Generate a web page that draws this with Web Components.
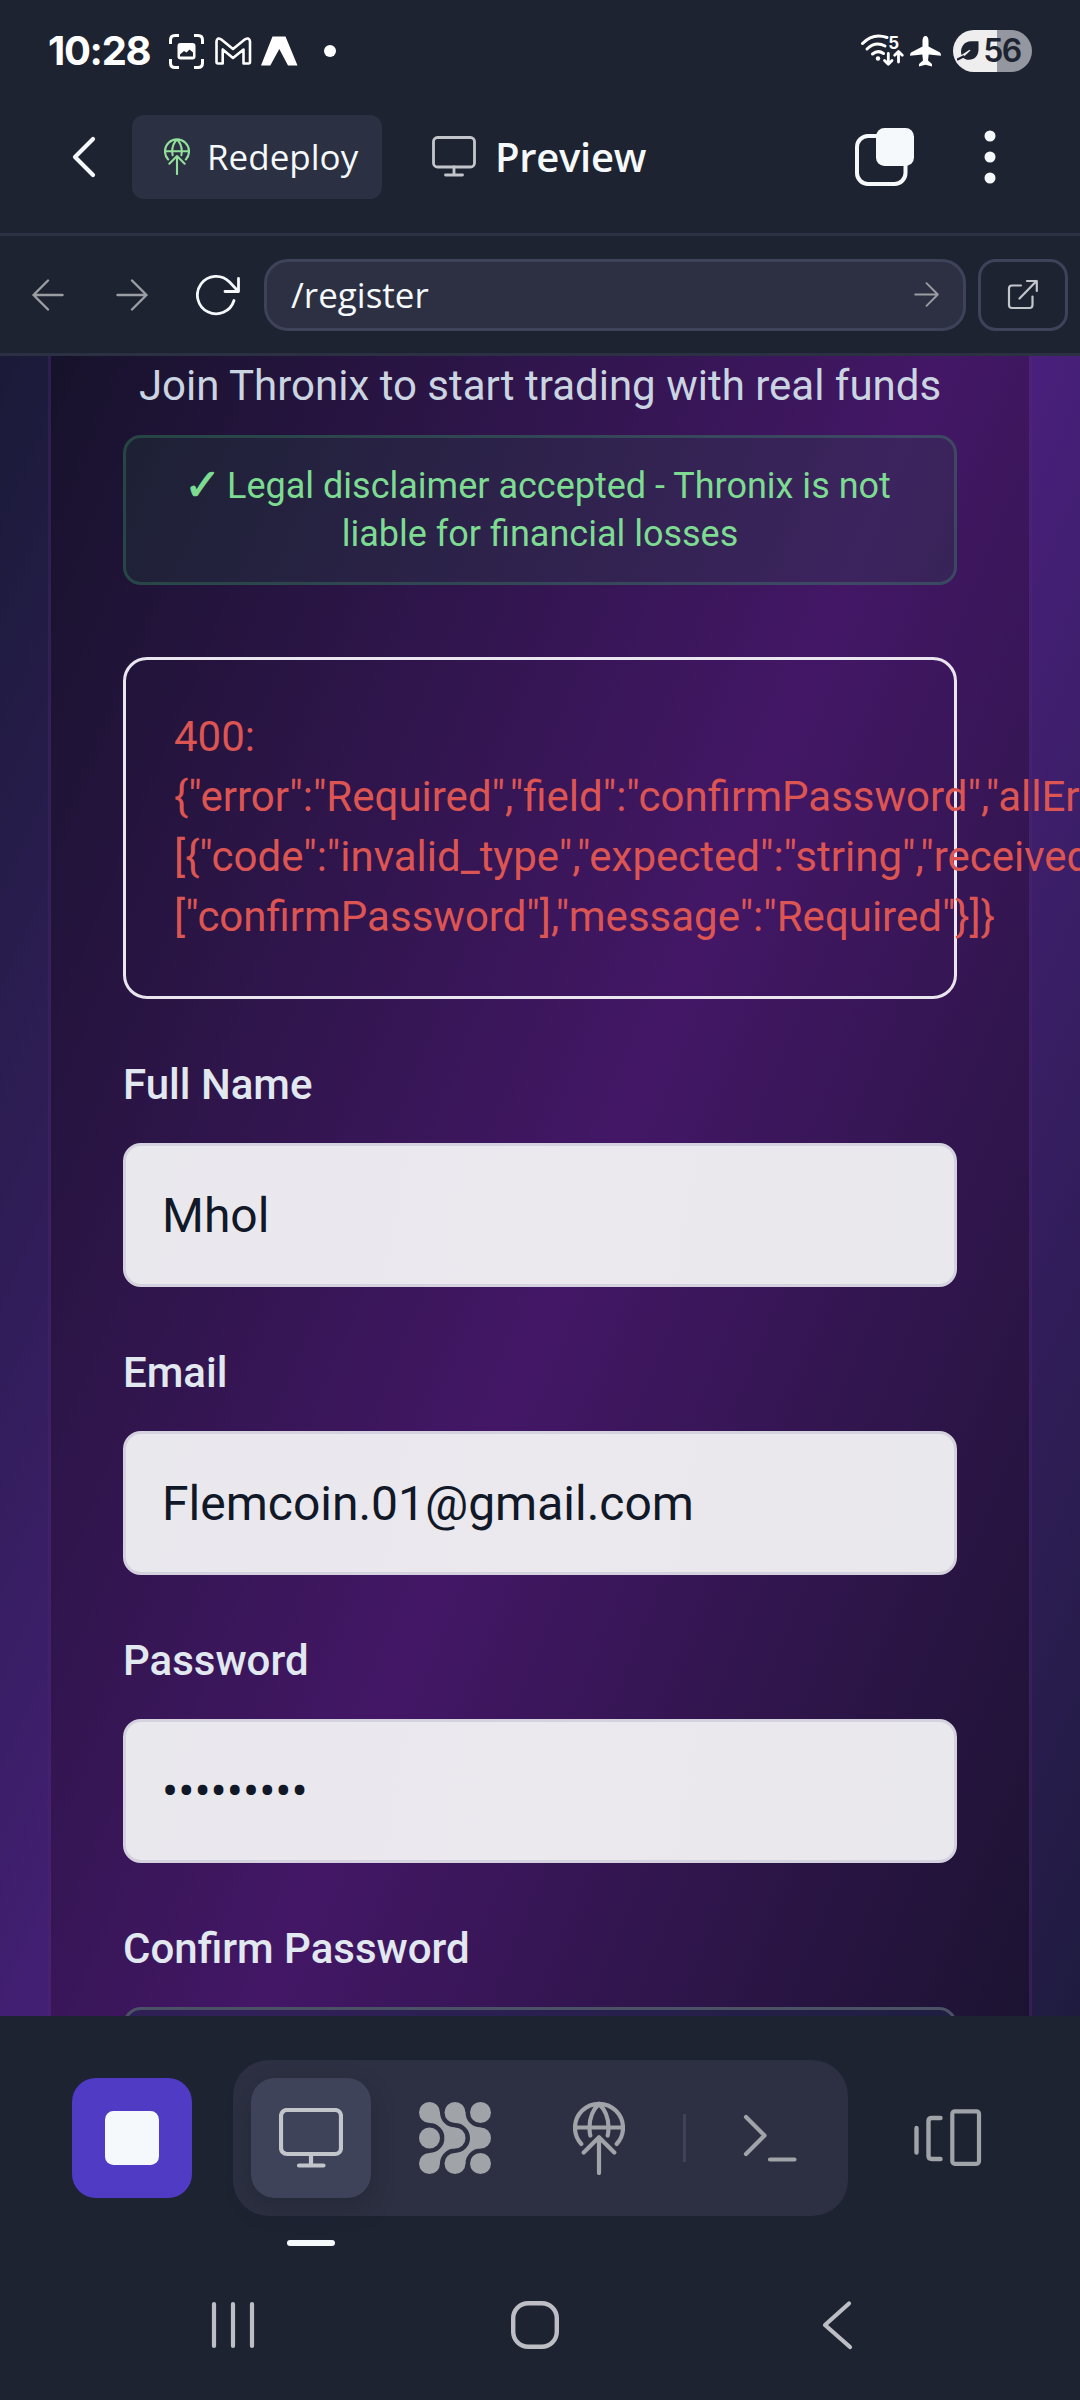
<!DOCTYPE html>
<html lang="en">
<head>
<meta charset="utf-8">
<title>Preview</title>
<style>
html,body{margin:0;background:#1e2332}
body{width:1080px;height:2400px;overflow:hidden;font-family:Roboto,"Noto Sans",sans-serif;color:#f5f9fc}
</style>
</head>
<body>
<app-shell></app-shell>
<script>
const define=(tag,css,html)=>{
  customElements.define(tag,class extends HTMLElement{
    constructor(){
      super();
      const root=this.attachShadow({mode:'open'});
      root.innerHTML=`<style>*{box-sizing:border-box}svg{display:block}:host{box-sizing:border-box;display:block}${css}</style>${typeof html==='function'?html(this):html}`;
    }
  });
};

const neck='M10.5 0A15 15 0 0 0 25.5 15V25.5H15A15 15 0 0 0 0 10.5V0Z';
const ring=[0,25.5,51].flatMap(x=>[0,25.5,51].map(y=>`<circle cx="${x}" cy="${y}" r="10.5"/>`)).join('');
const globe=[52,74,`<path d="M8.3 43A24 24 0 1 1 43.7 43M2 26.5H50M26 3C19 9.500 16.500 18 16.500 26.500Q16.500 31 17.300 34.500M26 3C33 9.500 35.500 18 35.500 26.500Q35.500 31 34.700 34.500M26 72V36.500M10.700 51.500 26 36.200 41.300 51.500" stroke-width="4.200"/>`];
const icons={
  shot:[35,35,`<path d="M1.500 10V6Q1.500 1.500 6 1.500H10M25 1.500H29Q33.500 1.500 33.500 6V10M33.500 25V29Q33.500 33.500 29 33.500H25M10 33.500H6Q1.500 33.500 1.500 29V25" stroke-width="3" stroke-linecap="butt"/><path fill="currentColor" stroke="none" fill-rule="evenodd" d="M11.500 9H23.500Q26.500 9 26.500 12V22.500Q26.500 25.500 23.500 25.500H11.500Q8.500 25.500 8.500 22.500V12Q8.500 9 11.500 9ZM11 22.500H24V18.500L20.500 15.500 17.500 18.500 15 17 11 20.500Z"/>`],
  mail:[38,30,`<path d="M2.500 5.500Q3 1 7 3.300L19 13 31 3.300Q35.500 1 36 5.500V26Q36 27.500 34.500 27.500H29.500V13.500L19 22 8.700 13.500V27.500H4Q2.500 27.500 2.500 26Z" stroke-width="2.600"/>`],
  peak:[37,30,`<path fill="currentColor" stroke="none" d="M11.500 .5H24.500L36.500 29.500H27L18.300 13 9.300 29.500H0Z"/>`],
  plane:[31,31,`<path fill="currentColor" stroke="none" d="M15.500 0C17.600 0 18.500 2 18.500 5V10.500L30 16.500Q31 17.300 31 19.800L18.700 18.500 18 24.500 22 28V30.500L15.500 28.800 9 30.500V28L13 24.500 12.300 18.500 0 19.800Q0 17.300 1 16.500L12.500 10.500V5C12.500 2 13.400 0 15.500 0Z"/>`],
  wifi:[44,34,`<path d="M1.500 9.500Q12 -1.500 26 3.500" stroke-width="3"/><path d="M6 15Q14.500 7 24 12" stroke-width="3"/><path d="M11.500 20Q17 15.500 22.500 19.500" stroke-width="3"/><circle cx="17" cy="24.500" r="2.200" fill="currentColor" stroke="none"/><path d="M27.300 19.500V30M23.500 26.500 27.300 30.300 31 26.500M37.500 28V18M33.700 21.300 37.500 17.500 41.300 21.300" stroke-width="2.800"/><text x="27.200" y="14.500" font-family="Inter" font-weight="700" font-size="17" fill="currentColor" stroke="none">5</text>`],
  leaf:[22,20,`<path fill="currentColor" stroke="none" d="M21.500 .3V8.500C21.500 15 17.500 18.800 12 18.800 9.500 18.800 7.500 18 6 16.500L13.500 9.500 12.500 8.700 4.500 14C2.500 5.500 8 .3 14 .3Z"/><path d="M1 18.300 6.500 15.500" stroke-width="2.400"/>`],
  back:[26,42,`<path d="M22 3 4 21 22 39" stroke-width="4.200"/>`],
  globe,
  monitor:[64,60,`<rect x="2" y="2" width="60" height="44" rx="6" stroke-width="4.200"/><path d="M32 46V57M20 57.500H44.500" stroke-width="4.200"/>`],
  monitorThin:[44,41,`<rect x="1.500" y="1.500" width="41" height="29.500" rx="4" stroke-width="2.800"/><path d="M22 31V38.500M13.500 39H30.500" stroke-width="2.800"/>`],
  panes:[60,60,`<rect x="2" y="9" width="48.500" height="48" rx="11" stroke-width="4"/><rect x="21" y="1" width="38" height="38" rx="8.500" fill="currentColor" stroke="none"/>`],
  more:[12,56,`<g fill="currentColor" stroke="none"><circle cx="6" cy="7" r="5.500"/><circle cx="6" cy="28" r="5.500"/><circle cx="6" cy="49" r="5.500"/></g>`],
  left:[32,32,`<path d="M30.500 16H1.500M16 1.500 1.500 16 16 30.500" stroke-width="2.400"/>`],
  right:[32,32,`<path d="M1.500 16H30.500M16 1.500 30.500 16 16 30.500" stroke-width="2.400"/>`],
  reload:[44,42,`<path d="M38 26.500A18.700 18.700 0 1 1 33.500 8L42 17M42.500 4.500V17.500H29" stroke-width="2.800"/>`],
  open:[32,32,`<path d="M14 6.500H5Q2 6.500 2 9.500V26Q2 29 5 29H22.500Q25.500 29 25.500 26V17.500M12.500 19.500 29.500 2M20 2H29.800V12" stroke-width="2.200"/>`],
  stop:[54,54,`<rect width="54" height="54" rx="8.500" fill="currentColor" stroke="none"/>`],
  mesh:[72,72,`<g fill="currentColor" stroke="none" transform="translate(10.500 10.500)">${ring}<path d="${neck}"/><path d="${neck}" transform="translate(25.500)"/><path d="${neck}" transform="translate(0 51) scale(1 -1)"/><path d="${neck}" transform="translate(25.500 51) scale(1 -1)"/></g>`],
  shell:[54,50,`<path d="M3 4 21.500 22.500 3 41M27 46.500H51.500" stroke-width="4.200"/>`],
  tabs:[68,60,`<path d="M2.500 20V44.500M26.500 10H18Q14.500 10 14.500 13V48Q14.500 51 18 51H26.500" stroke-width="4.400"/><rect x="38.300" y="3.300" width="26.700" height="52.500" rx="2.500" stroke-width="4.200"/>`],
  recents:[44,48,`<path d="M3 3V45M22 3V45M41 3V45" stroke-width="4.200"/>`],
  home:[50,50,`<rect x="3.200" y="3.200" width="43.600" height="43.600" rx="15" stroke-width="4.400"/>`],
  navBack:[32,50,`<path d="M28 3.500 4 25 29 47" stroke-width="4.200"/>`]
};
define('ui-icon',':host{flex:none;display:block}',el=>{
  const [w,h,body]=icons[el.getAttribute('name')];
  const width=+(el.getAttribute('width')||w);
  return `<svg width="${width}" height="${h*width/w}" viewBox="0 0 ${w} ${h}" fill="none" stroke="currentColor" stroke-linecap="round" stroke-linejoin="round">${body}</svg>`;
});

define('battery-pill',`:host{display:flex;align-items:center;justify-content:center;gap:4px;width:79px;height:42px;border-radius:21px;padding-right:7px;color:#1e2332;background:linear-gradient(90deg,#eee 44px,#94979f 44px);font:600 32px/42px Inter,sans-serif;letter-spacing:-1.5px}`,
  `<ui-icon name="leaf"></ui-icon><span><slot></slot></span>`);

define('status-bar',`:host{display:flex;align-items:center;height:102px;padding:0 48px 0 49px;color:#fff}
time{font:700 40px/48px Inter,sans-serif;letter-spacing:-1.3px;width:121px;margin-left:-1px;white-space:nowrap}
.grp{display:flex;align-items:center;gap:11px}.dot{width:12px;height:12px;border-radius:50%;background:#fff;margin-left:15px}
.end{margin-left:auto;gap:5px}battery-pill{margin-left:7px}`,
`<time>10:28</time><div class="grp"><ui-icon name="shot"></ui-icon><ui-icon name="mail" style="margin-left:-1px"></ui-icon><ui-icon name="peak" style="margin-left:-2px"></ui-icon><i class="dot"></i></div>
<div class="grp end"><ui-icon name="wifi"></ui-icon><ui-icon name="plane"></ui-icon><battery-pill>56</battery-pill></div>`);

define('app-header',`:host{display:flex;align-items:center;height:134px;padding:2px 84px 24px 71px;border-bottom:3px solid #2b3042}
.chip{display:flex;align-items:center;width:250px;height:84px;margin-left:35px;padding-left:32px;border-radius:12px;background:#2b3042;font:400 35px/46px "Open Sans",sans-serif}
.chip ui-icon{color:#93e09b}.chip span{margin-left:17px}
.mon{color:#c2c6cb;margin-left:50px}.title{font:600 40px/50px "Open Sans",sans-serif;margin-left:19px;letter-spacing:-.3px}
.acts{display:flex;align-items:center;gap:69px;margin-left:auto}`,
`<ui-icon name="back"></ui-icon><div class="chip"><ui-icon name="globe" width="26"></ui-icon><span>Redeploy</span></div>
<ui-icon class="mon" name="monitorThin"></ui-icon><span class="title">Preview</span><div class="acts"><ui-icon name="panes"></ui-icon><ui-icon name="more"></ui-icon></div>`);

define('address-bar',`:host{display:flex;align-items:center;height:120px;padding:0 12px 0 32px;border-bottom:3px solid #2b3042}
.dim{color:#9a9da2}.field{display:flex;flex:none;align-items:center;justify-content:space-between;width:702px;height:72px;margin-left:24px;padding:0 24px;border:3px solid #3f4359;border-radius:24px;background:#2c3042;font:400 35px/46px "Open Sans",sans-serif}
.open{display:flex;flex:none;align-items:center;justify-content:center;width:90px;height:72px;margin-left:12px;border:3px solid #3f4359;border-radius:18px;color:#c2c6cb}`,
`<ui-icon class="dim" name="left"></ui-icon><ui-icon class="dim" name="right" style="margin-left:52px"></ui-icon><ui-icon name="reload" style="margin-left:48px"></ui-icon>
<div class="field"><span>/register</span><ui-icon class="dim" name="right" width="25"></ui-icon></div><div class="open"><ui-icon name="open"></ui-icon></div>`);

define('notice-banner',`:host{width:834px;height:150px;padding:24px;margin-top:19px;border:3px solid rgba(74,222,128,.2);border-radius:18px;background:rgba(34,90,64,.2);color:#7ddc92;font:400 36px/48px Roboto,sans-serif;text-align:center}
i{display:inline-block;width:30px;margin-right:-1px;font:normal 44px/40px "DejaVu Sans",sans-serif;-webkit-text-stroke:1px;text-indent:-5px;vertical-align:-2px}`,`<i>✓</i> <slot></slot>`);

define('error-alert',`:host{width:834px;height:342px;margin-top:72px;padding:47px 48px;border:3px solid #e9e6ef;border-radius:24px;color:#dd5552;font:400 42px/60px Roboto,sans-serif;white-space:pre}`,`<slot></slot>`);

define('form-field',`:host{margin-top:56px;width:834px}
label{display:block;color:#e2e8f0;font:500 42px/60px Roboto,sans-serif;height:60px;margin-bottom:28px}
.box{height:144px;padding:0 36px;border:3px solid #d5d2df;border-radius:18px;background:linear-gradient(100deg,#e9e8ed,#ebe8ee 50%,#e9e8ec);color:#111827;font:400 48px/140px Roboto,sans-serif}
:host([empty]) .box{background:rgba(30,41,75,.5);border-color:#4b5265}`,`<label><slot name="label"></slot></label><div class="box"><slot></slot></div>`);

define('register-card',`:host{width:984px;height:1660px;margin:0 auto;padding:0 72px;border:solid rgba(140,80,220,.2);border-width:0 3px;background:linear-gradient(to bottom right,#121225,#431766 50%,#111223) 0 -225px/984px 2400px border-box}
h2{margin:0;color:#cbd5e1;font:400 42px/60px Roboto,sans-serif;text-align:center;white-space:nowrap}`,
`<h2>Join Thronix to start trading with real funds</h2>
<notice-banner>Legal disclaimer accepted - Thronix is not<br>liable for financial losses</notice-banner>
<error-alert>400:
{"error":"Required","field":"confirmPassword","allErrors":
[{"code":"invalid_type","expected":"string","received":
["confirmPassword"],"message":"Required"}]}</error-alert>
<form-field><span slot="label">Full Name</span>Mhol</form-field>
<form-field><span slot="label">Email</span>Flemcoin.01@gmail.com</form-field>
<form-field><span slot="label">Password</span>•••••••••</form-field>
<form-field empty><span slot="label">Confirm Password</span></form-field>`);

define('preview-frame',`:host{height:1660px;overflow:hidden;background:linear-gradient(to bottom right,#121a2d,#4e2083 50%,#121a2d) 0 -310px/1080px 2496px}`,`<register-card></register-card>`);

define('dock-button',`:host{display:flex;flex:none;align-items:center;justify-content:center;width:120px;height:120px;border-radius:24px;color:#a0a3a8}
:host([primary]){background:#4f3bc4;color:#f5f9fc}:host([active]){background:#3f4359;color:#c2c6cb;box-shadow:0 10px 24px rgba(20,24,36,.28)}`,`<slot></slot>`);

define('tool-dock',`:host{display:flex;align-items:center;height:156px;margin-top:44px;padding-left:72px}
.tray{display:flex;align-items:center;gap:24px;width:615px;height:156px;margin-left:41px;padding:0 18px;border-radius:36px;background:#2c3042}
.sep{width:3px;height:48px;background:#3f4359}.last{margin-left:40px}`,
`<dock-button primary><ui-icon name="stop"></ui-icon></dock-button>
<div class="tray"><dock-button active><ui-icon name="monitor"></ui-icon></dock-button><dock-button><ui-icon name="mesh"></ui-icon></dock-button><dock-button><ui-icon name="globe"></ui-icon></dock-button><i class="sep"></i><dock-button><ui-icon name="shell"></ui-icon></dock-button></div>
<dock-button class="last"><ui-icon name="tabs"></ui-icon></dock-button>`);

define('system-nav',`:host{display:flex;align-items:center;height:50px;margin-top:54px;padding-left:211px;color:#bcbec3}`,
`<ui-icon name="recents"></ui-icon><ui-icon name="home" style="margin-left:255px"></ui-icon><ui-icon name="navBack" style="margin-left:261px"></ui-icon>`);

define('app-shell',`:host{width:1080px;height:2400px;overflow:hidden;background:#1e2332}
.mark{width:48px;height:6px;border-radius:3px;margin:24px 0 0 287px;background:#f5f9fc}`,
`<status-bar></status-bar><app-header></app-header><address-bar></address-bar><preview-frame></preview-frame><tool-dock></tool-dock><div class="mark"></div><system-nav></system-nav>`);
</script>
</body>
</html>
